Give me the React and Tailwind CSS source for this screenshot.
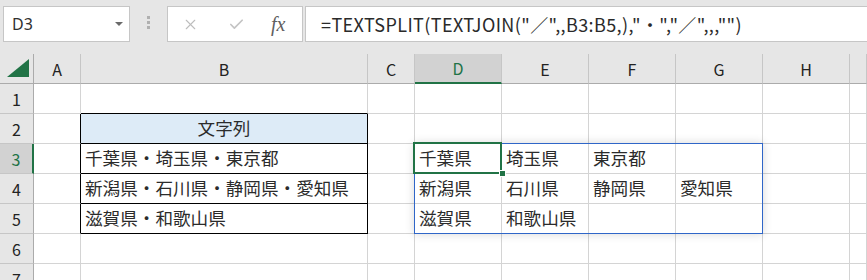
import { X, Check } from 'lucide-react'

const JP = { fontFamily: '"Noto Sans CJK JP", "Noto Sans", sans-serif' }

const cols = ['A', 'B', 'C', 'D', 'E', 'F', 'G', 'H', 'I']

const sheet = {
  B2: '文字列',
  B3: '千葉県・埼玉県・東京都',
  B4: '新潟県・石川県・静岡県・愛知県',
  B5: '滋賀県・和歌山県',
  D3: '千葉県', E3: '埼玉県', F3: '東京都',
  D4: '新潟県', E4: '石川県', F4: '静岡県', G4: '愛知県',
  D5: '滋賀県', E5: '和歌山県',
}

function Toolbar() {
  return (
    <div className="flex h-[54px] items-start bg-[#e6e6e6] pl-[3px] pt-[6px]">
      {/* Name box */}
      <div className="flex h-[36px] w-[127px] items-center justify-between border border-[#c6c6c6] bg-white pl-[8px] pr-[6px]">
        <span className="text-[16px] text-[#303030]" style={{ fontFamily: '"Noto Sans", sans-serif' }}>D3</span>
        <span className="h-0 w-0 border-x-[4px] border-t-[4px] border-x-transparent border-t-[#6a6a6a]" />
      </div>
      {/* Grip */}
      <div className="flex w-[37px] flex-col items-center gap-[2px] pt-[10px]">
        <span className="h-[3px] w-[3px] bg-[#b0b0b0]" />
        <span className="h-[3px] w-[3px] bg-[#b0b0b0]" />
        <span className="h-[3px] w-[3px] bg-[#b0b0b0]" />
      </div>
      {/* Cancel / Enter / fx */}
      <div className="flex h-[36px] w-[136px] items-center border border-[#c6c6c6] bg-white">
        <X size={17} strokeWidth={1.6} className="ml-[14px] text-[#bdbdbd]" />
        <Check size={17} strokeWidth={2.4} className="ml-[29px] text-[#c4c4c4]" />
        <span className="ml-[26px] text-[20px] italic text-[#606060]" style={{ fontFamily: '"Liberation Serif", serif' }}>fx</span>
      </div>
      {/* Formula */}
      <div
        className="ml-[2px] -mr-[4px] flex h-[36px] flex-1 items-center border border-[#c6c6c6] bg-white pl-[15px] text-[18px] tracking-[0.4px] text-[#2a2a2a]"
        style={JP}
      >
        =TEXTSPLIT(TEXTJOIN("／",,B3:B5,),"・","／",,,"")
      </div>
    </div>
  )
}

function Cell({ id, col, row }) {
  const inB = col === 'B' && row >= 2 && row <= 5
  const leftOfB = col === 'A' && row >= 2 && row <= 5
  const aboveB = col === 'B' && row === 1
  const text = sheet[id]

  const right = inB || leftOfB ? 'border-r-black' : 'border-r-[#d4d4d4]'
  const bottom = inB || aboveB ? 'border-b-black' : 'border-b-[#d4d4d4]'
  const bg = id === 'B2' ? 'bg-[#ddebf7]' : 'bg-white'
  const align = id === 'B2' ? 'justify-center' : 'justify-start'

  return (
    <div className={`relative flex h-[30px] items-center overflow-visible whitespace-nowrap border-b border-r px-[4px] text-[17.6px] text-[#2b2b2b] ${right} ${bottom} ${bg} ${align}`}>
      {text}
      {id === 'D3' && (
        <>
          {/* spill range */}
          <div className="pointer-events-none absolute -left-px -top-px z-10 h-[91px] w-[349px] border border-[#2f66c8] shadow-[0_0_9px_rgba(0,0,0,0.16)]" />
          {/* active cell */}
          <div className="pointer-events-none absolute -bottom-px -left-[2px] -right-px -top-[2px] z-20 border-2 border-[#217346]" />
          <div className="absolute -bottom-[4px] -right-[5px] z-30 h-[7px] w-[7px] border border-white bg-[#217346]" />
        </>
      )}
    </div>
  )
}

export default function App() {
  const rows = [1, 2, 3, 4, 5, 6, 7]
  return (
    <div className="h-[280px] w-[867px] overflow-hidden bg-white" style={JP}>
      <Toolbar />
      <div className="grid grid-cols-[34px_47px_287px_47px_87px_87px_87px_87px_87px_1fr]">
        {/* header row */}
        <div className="flex h-[30px] items-end justify-end border-b border-r border-b-[#ababab] border-r-[#ababab] bg-[#e6e6e6] pb-[6px] pr-[3px]">
          <svg width="23" height="18" viewBox="0 0 23 18">
            <polygon points="22,0 22,18 0,18" fill="#217346" />
          </svg>
        </div>
        {cols.map(c => (
          <div
            key={c}
            className={`flex h-[30px] items-center justify-center border-r border-r-[#c6c6c6] text-[16px] ${
              c === 'D'
                ? 'border-b-2 border-b-[#217346] bg-[#d2d2d2] text-[#217346]'
                : 'border-b border-b-[#ababab] bg-[#e6e6e6] text-[#222]'
            }`}
          >
            {c === 'I' ? '' : c}
          </div>
        ))}
        {rows.map(r => (
          <div key={r} className="contents">
            <div
              className={`flex h-[30px] items-center justify-center border-b border-b-[#c6c6c6] text-[16px] ${
                r === 3
                  ? 'border-r-2 border-r-[#217346] bg-[#d2d2d2] text-[#217346]'
                  : 'border-r border-r-[#ababab] bg-[#e6e6e6] text-[#222]'
              }`}
            >
              {r}
            </div>
            {cols.map(c => (
              <Cell key={c + r} id={c + r} col={c} row={r} />
            ))}
          </div>
        ))}
      </div>
    </div>
  )
}
